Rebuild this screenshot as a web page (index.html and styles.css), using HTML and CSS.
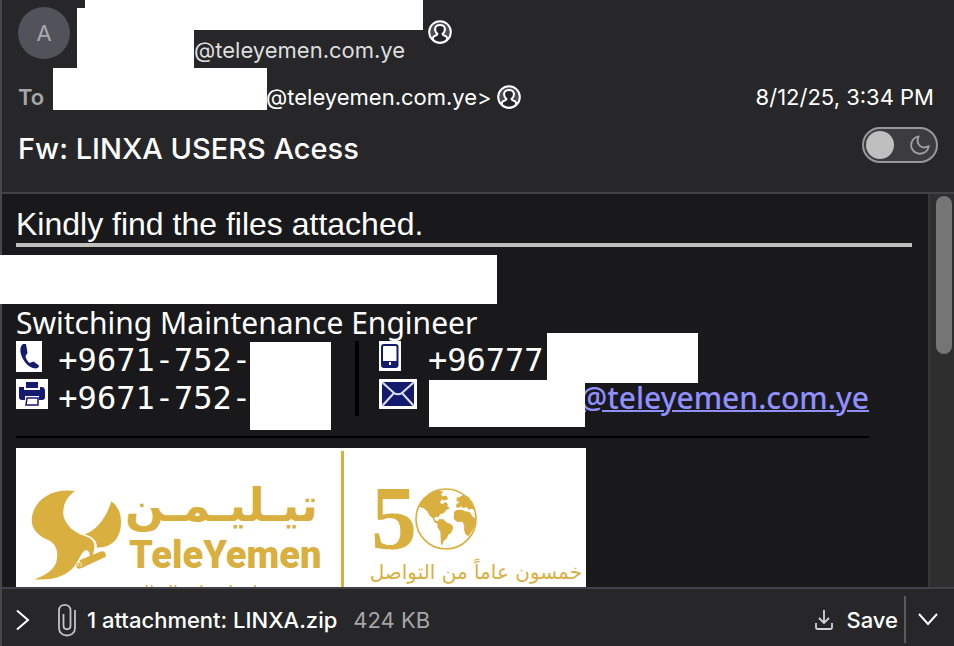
FILE: index.html
```
<!DOCTYPE html>
<html lang="en">
<head>
    <meta charset="UTF-8">
    <meta name="viewport" content="width=device-width, initial-scale=1.0">
    <title>Fw: LINXA USERS Acess</title>
    <link rel="stylesheet" href="styles.css">
</head>
<body>
    <svg width="0" height="0" class="defs">
        <symbol id="person" viewBox="0 0 24 24">
            <circle cx="12" cy="12" r="10.8" fill="#4d4d4f" stroke="currentColor" stroke-width="2"/>
            <path d="M5 20v-2.500c0-2 4.500-1.500 4.500-3.500C5.500 10.500 6.500 5 12 5s6.500 5.500 2.500 9c0 2 4.500 1.500 4.500 3.500V20c-3.500 3.500-10.500 3.500-14 0z" fill="#252527" stroke="currentColor" stroke-width="2"/>
        </symbol>
    </svg>

    <header class="mail-header">
        <div class="sender">
            <div class="avatar">A</div>
            <div class="sender-info">
                <span class="redacted redacted-from"></span>
                <span class="redacted redacted-name"></span>
                <span class="address">@teleyemen.com.ye</span>
            </div>
            <svg class="person-icon"><use href="#person"/></svg>
        </div>
        <div class="recipient">
            <span class="to-label">To</span>
            <span class="redacted redacted-to"></span>
            <span class="to-address">@teleyemen.com.ye&gt;</span>
            <svg class="person-icon"><use href="#person"/></svg>
            <time class="date">8/12/25, 3:34 PM</time>
        </div>
        <div class="subject-row">
            <h1>Fw: LINXA USERS Acess</h1>
            <button class="theme-toggle" aria-label="Toggle dark message body">
                <span class="knob"></span>
                <svg width="20" height="20" viewBox="0 0 22 22" fill="none" stroke="#a2a2a4" stroke-width="2" stroke-linejoin="round">
                    <path d="M9.500 1.500C4.500 2.300 1 6.500 1.200 11.500 1.500 17 6 20.600 11 20.600c5 0 8.800-3.300 9.700-8.300-4 2-7.700 1.700-10-.6C8.200 9 7.800 5 9.500 1.500z"/>
                </svg>
            </button>
        </div>
    </header>

    <main class="mail-body">
        <div class="message">
            <p class="greeting">Kindly find the files attached.</p>
            <div class="redacted redacted-signature"></div>
            <section class="signature">
                <p class="role">Switching Maintenance Engineer</p>
                <div class="contacts">
                    <div class="contact-col office">
                        <div class="contact">
                            <svg class="icon" width="26" height="31" viewBox="0 0 26 31">
                                <rect width="26" height="31" fill="#fff"/>
                                <path d="M7 3C4 5 3.500 10 6 16c3 7 9 11.500 14 11.500 2-.5 3-1.500 3-3l-5.500-4-4 1.500c-2-1.500-4-5-4-7l2-3L10 3z" fill="#141a6e"/>
                            </svg>
                            <span>+9671-752-</span>
                        </div>
                        <div class="contact">
                            <svg class="icon" width="32" height="30" viewBox="0 0 32 30">
                                <rect width="32" height="30" fill="#fff"/>
                                <path d="M10 3h12v6H10zM3 8h5v3h16V8h2c2 0 3 2 3 4v6c0 2-1 3-3 3h-3v-4H9v4H6c-2 0-3-1-3-3z" fill="#141a6e"/>
                                <path d="M11 19h11v7H10z" fill="#fff" stroke="#141a6e" stroke-width="1.500"/>
                            </svg>
                            <span>+9671-752-</span>
                        </div>
                        <span class="redacted redacted-extension"></span>
                    </div>
                    <div class="contact-col direct">
                        <div class="contact">
                            <svg class="icon" width="22" height="30" viewBox="0 0 22 30">
                                <rect width="22" height="30" fill="#fff"/>
                                <rect x="3" y="4" width="15.500" height="22" rx="2" fill="#fff" stroke="#141a6e" stroke-width="2"/>
                                <path d="M3 20h16v6H3z" fill="#141a6e"/>
                                <path d="M11 21v3" stroke="#fff" stroke-width="2"/>
                            </svg>
                            <span>+96777</span>
                        </div>
                        <div class="contact">
                            <svg class="icon" width="38" height="30" viewBox="0 0 38 30">
                                <rect width="38" height="30" fill="#fff"/>
                                <rect x="3" y="3" width="32" height="24" rx="3" fill="#141a6e"/>
                                <path d="M4 4l11 10c3 2 5 2 8 0L34 4M4 26l11-12M34 26L23 14" fill="none" stroke="#dfe3f5" stroke-width="2"/>
                            </svg>
                            <a class="email" href="mailto:@teleyemen.com.ye">@teleyemen.com.ye</a>
                        </div>
                        <span class="redacted redacted-mobile"></span>
                        <span class="redacted redacted-email"></span>
                    </div>
                </div>
                <svg class="logo" width="570" height="160" viewBox="0 0 570 160" fill="#d9b03f">
                    <rect width="570" height="160" fill="#fff"/>
                    <!-- falcon, drawn at three times its size -->
                    <g transform="translate(0 -8) scale(.33333)">
                        <path d="M177 153C150 172 138 200 143 230c8 30 38 50 62 57 20 7 29 14 30 30 0 18-5 30-10 37l-4-3c2-16-7-24-16-19-10 8-15 25-29 45-20 28-60 45-121 41 35-12 59-30 66-52 7-30 1-50-20-64C70 290 47 270 47 240c3-58 58-98 130-87z"/>
                        <path d="M286 184c17 13 29 32 29 61 0 50-27 77-72 78 0-20-10-30-36-40 37-15 65-52 79-99z"/>
                        <path d="M190 361l66-27c10-3 17 9 12 17l-73 34c-10 4-14-2-14-10 0-6 6-10 12-9z"/>
                        <path d="M186 378c-4-10 10-14 11-5 0 5-4 6-6 3" fill="none" stroke="#fff" stroke-width="2.500"/>
                    </g>
                    <text class="logo-arabic" x="302" y="73" direction="rtl">تيـليـمـن</text>
                    <text class="logo-name" x="113" y="120">TeleYemen</text>
                    <text class="logo-tagline" x="303" y="151" direction="rtl">تقنية تصل بك واتصال الـ</text>
                    <rect x="325" y="3" width="3" height="157"/>
                    <text class="logo-five" x="355" y="101">5</text>
                    <!-- globe -->
                    <g transform="translate(354 32) scale(.33333)">
                        <circle cx="228" cy="117" r="90" fill="none" stroke="#d9b03f" stroke-width="5"/>
                        <path d="M145 80C155 60 175 42 195 33l10-2 16 4-8 6 4 8 12-2 6 10-14 5-5-4-6 10 8 5 8-8 8 8-2 6 8 6-10 4-8 10-12 4-5 9-8-2-4 5 3 7 8 1v6l8 3 7-4-2 9-8-3-16-7-5-13-9-7-8-14-11-9z"/>
                        <path d="M207 117l13 1 9 9 17 7 4 10-7 15-8 5-5 12-9 6-4 14-4-3-1-18-1-20-9-14 1-14z"/>
                        <path d="M252 96l7-6 18-1 8 5 14 2 9 14 7 5 2 12-7 20-14 22-10-6-4-14 1-10-5-14-16 1-11-9 1-15zM258 80l2-9 8-3-4-6 8-14 10-4 14 7 13 19 4 20-9-4-7 3-8-8-9 4-7-6-9 5z"/>
                        <path d="M260 53l9-3-2 13-7 2z"/>
                    </g>
                    <text class="logo-motto" x="566" y="131" direction="rtl">خمسون عاماً من التواصل</text>
                </svg>
            </section>
        </div>
        <div class="scrollbar"><div class="thumb"></div></div>
    </main>

    <footer class="attachments">
        <button class="expand" aria-label="Show attachments">
            <svg width="14" height="22" viewBox="0 0 14 22" fill="none" stroke="currentColor" stroke-width="2"><path d="M1 1.500l11 9.500L1 20.500"/></svg>
        </button>
        <svg class="clip" width="18" height="34" viewBox="0 0 18 34" fill="none" stroke="currentColor" stroke-width="1.800">
            <path d="M12.500 10v12.500c0 5-7 5-7 0V11M12.500 12V7.500C12.500 0 1 0 1 7.500V25c0 10 16 10 16 0V7"/>
        </svg>
        <span class="file">1 attachment: LINXA.zip</span>
        <span class="size">424 KB</span>
        <button class="save">
            <svg width="18" height="20" viewBox="0 0 18 20" fill="none" stroke="#d4d4d5" stroke-width="1.800"><path d="M9 0v13M4 8l5 5 5-5M1 13v4.500c0 1 .5 1.500 1.500 1.500h13c1 0 1.500-.5 1.500-1.500V13"/></svg>
            Save
        </button>
        <button class="more" aria-label="More save options">
            <svg width="20" height="13" viewBox="0 0 20 13" fill="none" stroke="currentColor" stroke-width="2"><path d="M1 1l9 10 9-10"/></svg>
        </button>
    </footer>
</body>
</html>
```
FILE: styles.css
```
* {
    box-sizing: border-box;
}
body {
    display: flex;
    flex-direction: column;
    height: 100vh;
    margin: 0;
    overflow: hidden;
    background: linear-gradient(to right, #48484a 2px, #19191b 2px);
    color: #fff;
    font-family: Inter, "Noto Sans", sans-serif;
    font-size: 22px;
}
h1, p {
    margin: 0;
    font-weight: normal;
}
button {
    padding: 0;
    border: none;
    background: none;
    color: inherit;
    font: inherit;
    cursor: pointer;
}
svg {
    display: block;
    flex-shrink: 0;
}
.defs {
    position: absolute;
}
.redacted {
    background-color: #fff;
}

/* header */
.mail-header {
    flex-shrink: 0;
    margin-left: 2px;
    padding: 0 16px;
    border-bottom: 2px solid #414147;
    background-color: #272729;
}
.sender {
    display: flex;
    height: 68px;
}
.avatar {
    width: 52px;
    height: 52px;
    margin-top: 7px;
    border-radius: 50%;
    background-color: #52525b;
    color: #a9a9b2;
    line-height: 52px;
    text-align: center;
}
.sender-info {
    position: relative;
    width: 358px;
    padding: 36px 0 0 124px;
    line-height: 28px;
}
.address {
    color: #dededf;
}
.redacted-from {
    position: absolute;
    top: 0;
    left: 15px;
    width: 338px;
    height: 30px;
}
.redacted-name {
    position: absolute;
    top: 8px;
    left: 7px;
    width: 117px;
    height: 60px;
}
.person-icon {
    width: 24px;
    height: 24px;
}
.sender .person-icon {
    margin-top: 20px;
}
.recipient {
    display: flex;
    align-items: center;
    height: 58px;
}
.to-label {
    width: 35px;
    color: #a6a6a8;
    font-weight: 600;
}
.redacted-to {
    align-self: flex-start;
    width: 214px;
    height: 42px;
}
.to-address {
    margin: 0 5px 0 -1px;
}
.date {
    margin-left: auto;
    padding-right: 4px;
}
.subject-row {
    display: flex;
    align-items: center;
    justify-content: space-between;
    height: 66px;
    padding-bottom: 22px;
}
h1 {
    font-size: 29px;
    font-weight: 500;
}
.theme-toggle {
    display: flex;
    align-items: center;
    justify-content: space-between;
    width: 76px;
    height: 36px;
    margin-top: -6px;
    padding: 0 6px 0 2px;
    border: 2px solid #98989a;
    border-radius: 18px;
    background-color: #3c3c3e;
}
.knob {
    width: 28px;
    height: 28px;
    border-radius: 50%;
    background-color: #bfbfbf;
}

/* message */
.mail-body {
    display: flex;
    flex: 1;
    min-height: 0;
}
.message {
    flex: 1;
    min-width: 0;
    padding: 12px 16px 0 16px;
    overflow: hidden;
}
.greeting {
    height: 41px;
    border-bottom: 4px solid #bfbfbd;
    font-family: "Liberation Sans", Arial, sans-serif;
    font-size: 32px;
    line-height: 37px;
}
.redacted-signature {
    width: 497px;
    height: 49px;
    margin: 8px 0 0 -16px;
}
.signature {
    width: 853px;
    font-family: "Noto Sans", "Open Sans", sans-serif;
    font-size: 30px;
    font-weight: 500;
}
.role {
    line-height: 37px;
}
.contacts {
    display: flex;
    padding-bottom: 20px;
    border-bottom: 2px solid #000;
}
.contact-col {
    position: relative;
    height: 75px;
}
.office {
    width: 343px;
    border-right: 4px solid #000;
}
.direct {
    padding-left: 20px;
}
.contact {
    display: flex;
    height: 38px;
    line-height: 38px;
}
.contact span {
    margin-left: auto;
    font-family: "DejaVu Sans Mono", monospace;
    font-size: 32px;
    font-weight: 400;
}
.office .contact {
    width: 235px;
}
.direct .contact {
    width: 490px;
}
.direct .contact span {
    width: 441px;
}
.email {
    margin-left: auto;
    color: #8f8fff;
    text-decoration-thickness: 2px;
}
.redacted-extension {
    position: absolute;
    top: 1px;
    left: 234px;
    width: 81px;
    height: 88px;
}
.redacted-mobile {
    position: absolute;
    top: -8px;
    left: 188px;
    width: 151px;
    height: 50px;
}
.redacted-email {
    position: absolute;
    top: 39px;
    left: 70px;
    width: 156px;
    height: 47px;
}
.logo {
    margin-top: 10px;
}
.logo-arabic {
    font: bold 46px "DejaVu Sans", sans-serif;
}
.logo-name {
    font: 900 38px Roboto, sans-serif;
}
.logo-tagline {
    font: 18px "DejaVu Sans", sans-serif;
}
.logo-five {
    font: bold 92px "Liberation Serif", serif;
}
.logo-motto {
    font: 20px "DejaVu Sans", sans-serif;
}
.scrollbar {
    width: 26px;
    padding: 2px 2px 0 6px;
    border-left: 2px solid #363637;
    background-color: #2e2e2e;
}
.thumb {
    width: 16px;
    height: 158px;
    border-radius: 8px;
    background-color: #757575;
}

/* attachment bar */
.attachments {
    display: flex;
    align-items: center;
    flex-shrink: 0;
    height: 59px;
    margin-left: 2px;
    padding: 4px 16px 0 14px;
    border-top: 2px solid #414147;
    background-color: #272729;
}
.clip {
    margin: 0 11px 0 28px;
    color: #c4c4c5;
}
.file {
    font-weight: 500;
}
.size {
    margin-left: 16px;
    color: #a6a6a8;
}
.save {
    display: flex;
    align-items: center;
    gap: 13px;
    height: 47px;
    margin-left: auto;
    padding-right: 6px;
    border-right: 2px solid #5a5a5c;
    font-weight: 500;
}
.more {
    margin-left: 12px;
}
```
